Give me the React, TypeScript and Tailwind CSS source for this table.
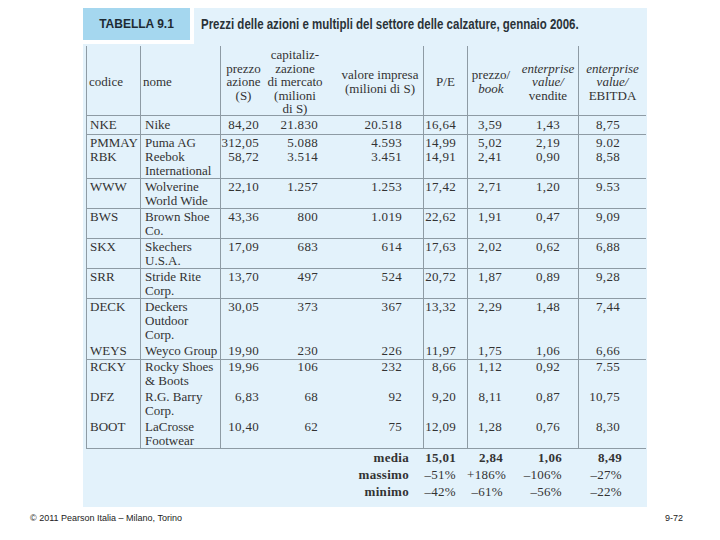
import React from "react";

type Row = {
  c: React.ReactNode[][];
  h: string;
  pt: string;
  border: boolean;
};

const GRID =
  "grid grid-cols-[54px_80px_45px_60px_98px_44px_51px_60px_68px]";

const CELL = [
  "border-l border-[#8e9ba4] pl-[3px] text-left tracking-[0px]",
  "border-l border-[#8e9ba4] pl-[4px] text-left tracking-[0px]",
  "border-l border-[#8e9ba4] pr-[6px] text-right",
  "pr-[7px] text-right",
  "pr-[21px] text-right",
  "border-l border-[#8e9ba4] pr-[11px] text-right",
  "border-l border-[#8e9ba4] pr-[16px] text-right",
  "pr-[18px] text-right",
  "border-l border-[#8e9ba4] pr-[26px] text-right",
];

const L = (s: string) => s.split("|");

const raw: [string, string, string, string, string, string, string, string, string, string, string, boolean][] = [
  ["NKE", "Nike", "84,20", "21.830", "20.518", "16,64", "3,59", "1,43", "8,75", "h-[18px]", "pt-[2px]", true],
  ["PMMAY", "Puma AG", "312,05", "5.088", "4.593", "14,99", "5,02", "2,19", "9.02", "h-[15px]", "pt-[1px]", false],
  ["RBK", "Reebok|International", "58,72", "3.514", "3.451", "14,91", "2,41", "0,90", "8,58", "h-[28px]", "pt-0", true],
  ["WWW", "Wolverine|World Wide", "22,10", "1.257", "1.253", "17,42", "2,71", "1,20", "9.53", "h-[29px]", "pt-[1px]", true],
  ["BWS", "Brown Shoe|Co.", "43,36", "800", "1.019", "22,62", "1,91", "0,47", "9,09", "h-[29px]", "pt-[1px]", true],
  ["SKX", "Skechers|U.S.A.", "17,09", "683", "614", "17,63", "2,02", "0,62", "6,88", "h-[29px]", "pt-[1px]", true],
  ["SRR", "Stride Rite|Corp.", "13,70", "497", "524", "20,72", "1,87", "0,89", "9,28", "h-[29px]", "pt-[1px]", true],
  ["DECK", "Deckers|Outdoor|Corp.", "30,05", "373", "367", "13,32", "2,29", "1,48", "7,44", "h-[44px]", "pt-[1px]", false],
  ["WEYS", "Weyco Group", "19,90", "230", "226", "11,97", "1,75", "1,06", "6,66", "h-[16px]", "pt-[1px]", true],
  ["RCKY", "Rocky Shoes|& Boots", "19,96", "106", "232", "8,66", "1,12", "0,92", "7.55", "h-[30px]", "pt-0", false],
  ["DFZ", "R.G. Barry|Corp.", "6,83", "68", "92", "9,20", "8,11", "0,87", "10,75", "h-[30px]", "pt-0", false],
  ["BOOT", "LaCrosse|Footwear", "10,40", "62", "75", "12,09", "1,28", "0,76", "8,30", "h-[28px]", "pt-0", true],
];

const rows: Row[] = raw.map((r) => ({
  c: r.slice(0, 9).map((s) => L(s as string)),
  h: r[9],
  pt: r[10],
  border: r[11],
}));

function Lines({ lines }: { lines: React.ReactNode[] }) {
  return (
    <>
      {lines.map((l, i) => (
        <div key={i}>{l}</div>
      ))}
    </>
  );
}

const HCELL = [
  "border-l border-[#8e9ba4] pl-[2px] items-start text-left",
  "border-l border-[#8e9ba4] pl-[2px] items-start text-left",
  "border-l border-[#8e9ba4] items-center text-center pl-[1px]",
  "items-center text-center",
  "items-center text-center pl-[12px]",
  "border-l border-[#8e9ba4] items-center text-center",
  "border-l border-[#8e9ba4] items-center text-center pr-[4px]",
  "items-center text-center",
  "border-l border-[#8e9ba4] items-center text-center",
];

const header: React.ReactNode[][] = [
  ["codice"],
  ["nome"],
  ["prezzo", "azione", "(S)"],
  ["capitaliz-", "zazione", "di mercato", "(milioni", "di S)"],
  ["valore impresa", "(milioni di S)"],
  ["P/E"],
  ["prezzo/", <i key="b">book</i>],
  [<i key="e">enterprise</i>, <i key="v">value/</i>, "vendite"],
  [<i key="e">enterprise</i>, <i key="v">value/</i>, "EBITDA"],
];

const summary: { label: string; vals: string[] }[] = [
  { label: "media", vals: ["15,01", "2,84", "1,06", "8,49"] },
  { label: "massimo", vals: ["–51%", "+186%", "–106%", "–27%"] },
  { label: "minimo", vals: ["–42%", "–61%", "–56%", "–22%"] },
];

export default function App() {
  return (
    <div className="w-[720px] h-[540px] bg-white flex flex-col">
      <div className="ml-[83px] mt-[8px] w-[564px] bg-[#e3f2fb] pl-[3px] pr-[1px] pb-[7px] font-['Liberation_Serif',serif] text-[#333]">
        {/* title row */}
        <div className="-ml-[3px] h-[38px] flex items-start">
          <div className="w-[111px] h-[36px] shrink-0 bg-white pr-[4px] pb-[4px]">
            <div className="w-[107px] h-[32px] bg-[#a5d7ef] flex items-center justify-center font-['Liberation_Sans',sans-serif] font-bold text-[12px] text-[#1e2a33]">
              TABELLA 9.1
            </div>
          </div>
          <div className="h-[32px] flex items-center pl-[7px] whitespace-nowrap">
            <span className="inline-block origin-left scale-x-[0.82] font-['Liberation_Sans',sans-serif] font-bold text-[14px] text-[#2a3238]">
              Prezzi delle azioni e multipli del settore delle calzature, gennaio 2006.
            </span>
          </div>
        </div>
        {/* header */}
        <div className={`${GRID} h-[70px] border-b border-[#8e9ba4] text-[13px] leading-[13.5px] whitespace-nowrap`}>
          {header.map((h, i) => (
            <div key={i} className={`${HCELL[i]} flex flex-col justify-center pt-[2px]`}>
              <Lines lines={h} />
            </div>
          ))}
        </div>
        {/* body */}
        {rows.map((r, ri) => (
          <div
            key={ri}
            className={`${GRID} ${r.border ? "border-b border-[#8e9ba4]" : ""} text-[13px] leading-[14px] tracking-[0.3px] whitespace-nowrap`}
          >
            {r.c.map((lines, ci) => (
              <div key={ci} className={`${CELL[ci]} ${r.h} ${r.pt}`}>
                <Lines lines={lines} />
              </div>
            ))}
          </div>
        ))}
        {/* summary */}
        <div>
          {summary.map((s, si) => (
            <div
              key={si}
              className={`${GRID} h-[17px] leading-[17px] text-[13px] tracking-[0.3px] ${si === 0 ? "font-bold" : ""}`}
            >
              <div className="col-span-5 text-right pr-[14px] font-bold">{s.label}</div>
              <div className="text-right pr-[11px]">{s.vals[0]}</div>
              <div className="text-right pr-[15px]">{s.vals[1]}</div>
              <div className="text-right pr-[16px]">{s.vals[2]}</div>
              <div className="text-right pr-[24px]">{s.vals[3]}</div>
            </div>
          ))}
        </div>
      </div>
      <div className="mt-[5px] flex justify-between pl-[30px] pr-[37px] font-['Liberation_Sans',sans-serif] text-[9px] text-[#222]">
        <span>© 2011 Pearson Italia – Milano, Torino</span>
        <span>9-72</span>
      </div>
    </div>
  );
}
